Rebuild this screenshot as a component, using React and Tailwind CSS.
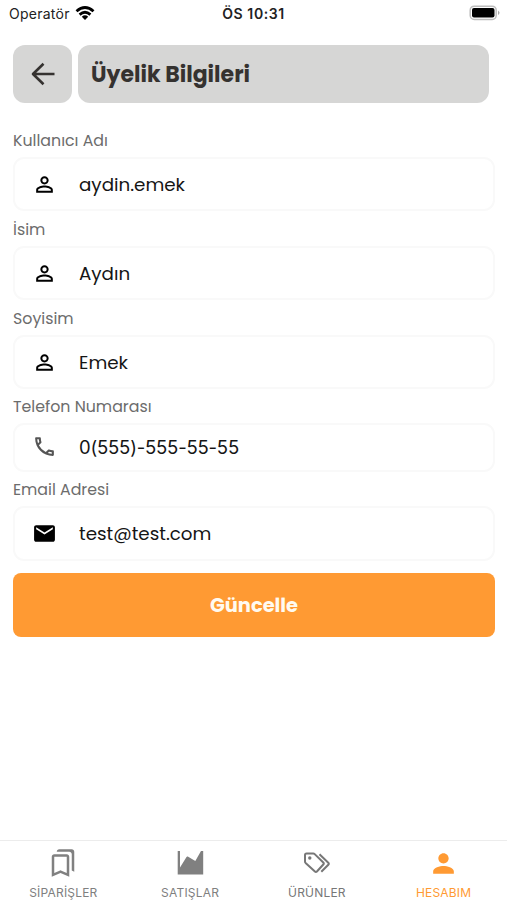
import { MdOutlineBookmarks, MdOutlinePhone, MdPerson, MdPersonOutline, MdEmail } from "react-icons/md";

/* ─── Form fields ─── */
const fields = [
  { label: "Kullanıcı Adı", value: "aydin.emek", icon: MdPersonOutline, labelStyle: "h-[35px]", valueStyle: "mt-[2px] text-[18.300px]", box: "h-[54px]", iconStyle: "text-black" },
  { label: "İsim", value: "Aydın", icon: MdPersonOutline, labelStyle: "h-[35px]", valueStyle: "mt-px text-[18.300px]", box: "h-[54px]", iconStyle: "text-black" },
  { label: "Soyisim", value: "Emek", icon: MdPersonOutline, labelStyle: "h-[35px]", valueStyle: "mt-px text-[18.300px]", box: "h-[54px]", iconStyle: "text-black" },
  { label: "Telefon Numarası", value: "0(555)-555-55-55", icon: MdOutlinePhone, labelStyle: "h-[34px]", valueStyle: "mt-px font-['Inter','Liberation_Sans',sans-serif] text-[18.500px] tracking-[-0.2px]", box: "h-[49px]", iconStyle: "-mt-[3px] text-[#555]" },
  { label: "Email Adresi", value: "test@test.com", icon: MdEmail, labelStyle: "h-[34px]", valueStyle: "text-[18.300px]", box: "h-[55px]", iconStyle: "text-black" },
];

function AreaIcon({ className }) {
  return (
    <svg viewBox="0 0 28 28" className={className} fill="currentColor">
      <path d="M1.700 2h2.300v16.500l6.500-10.600q.5-.8 1.300-.3l7.500 4.300L25 2h2.200v23.500H1.700z" />
    </svg>
  );
}

function TagsIcon({ className }) {
  return (
    <svg viewBox="0 0 28 28" className={className} fill="none" stroke="currentColor" strokeWidth="2" strokeLinejoin="round">
      <path d="M2 6Q2 4.500 3.500 4.500h6.700q.9 0 1.500.6l8.600 8.400q1 1 0 2l-6.400 7q-1 1-2 0L2.600 13.900Q2 13.300 2 12.400z" />
      <path d="m16.500 5.200 8.800 8.600q1 1 0 2l-7 7" />
      <circle cx="6.800" cy="9" r="1.700" fill="currentColor" stroke="none" />
    </svg>
  );
}

const tabs = [
  { label: "SİPARİŞLER", icon: MdOutlineBookmarks, iconStyle: "h-[30px] w-[30px]", color: "text-[#808080]" },
  { label: "SATIŞLAR", icon: AreaIcon, iconStyle: "h-7 w-7", color: "text-[#808080]" },
  { label: "ÜRÜNLER", icon: TagsIcon, iconStyle: "h-7 w-7", color: "text-[#777]" },
  { label: "HESABIM", icon: MdPerson, iconStyle: "h-[31px] w-[31px]", color: "text-[#ff9a33]" },
];

function StatusBar() {
  return (
    <div className="grid h-[27px] grid-cols-3 items-center pr-[7px] pl-[9px] font-['Inter','Liberation_Sans',sans-serif] text-black">
      <div className="flex items-center gap-[5px] text-[14px] tracking-[0.25px]">
        <span className="text-[#222]">Operatör</span>
        <svg viewBox="0 0 20 15" className="-mt-px h-[15px] w-5" fill="none" stroke="currentColor" strokeWidth="2.800">
          <path d="M1.500 5.300Q10-2.300 18.500 5.300M4.600 8.600Q10 3.900 15.400 8.600" />
          <path d="M6.800 10.700Q10 8 13.200 10.700L10 14z" fill="currentColor" stroke="none" />
        </svg>
      </div>
      <span className="-ml-[2px] text-center text-[14px] font-semibold tracking-[0.6px] text-[#222]">ÖS 10:31</span>
      <svg viewBox="0 0 31 16" className="-mt-px h-4 w-[31px] justify-self-end">
        <rect x="1.200" y="1.200" width="26" height="13.200" rx="4" fill="#fff" stroke="#bdbdbd" strokeWidth="1.500" />
        <rect x="3" y="3" width="22.500" height="9.600" rx="2" fill="#000" />
        <path d="M29 5.500q3 2.300 0 4.600z" fill="#aaa" />
      </svg>
    </div>
  );
}

function Field({ field }) {
  const Icon = field.icon;
  return (
    <div>
      <div className={`flex items-center pt-[2px] text-[15.800px] text-[#6c6c6c] ${field.labelStyle}`}>
        <span>{field.label}</span>
      </div>
      <div className={`flex items-center rounded-[11px] border-2 border-[#f9f9f9] pl-[17px] ${field.box}`}>
        <Icon className={`h-[25px] w-[25px] ${field.iconStyle}`} />
        <span className={`ml-[22px] text-[#151515] ${field.valueStyle}`}>{field.value}</span>
      </div>
    </div>
  );
}

function App() {
  return (
    <main className="flex h-[900px] w-[507px] flex-col overflow-hidden bg-white font-['Poppins','Inter',sans-serif]">
      <StatusBar />

      {/* Header */}
      <header className="mt-[18px] flex h-[58px] gap-[6px] pr-[18px] pl-[13px] text-[#353230]">
        <button className="flex w-[59px] items-center justify-center rounded-[12px] bg-[#d6d6d5]">
          <svg viewBox="0 0 24 24" className="h-6 w-6" fill="none" stroke="currentColor" strokeWidth="2.600" strokeLinejoin="round">
            <path d="M23.500 12H2M12.500 1.800 2 12l10.500 10.200" />
          </svg>
        </button>
        <h1 className="flex flex-1 items-center rounded-[12px] bg-[#d6d6d5] pl-[13px] text-[22px] font-bold">Üyelik Bilgileri</h1>
      </header>

      {/* Membership form */}
      <section className="mt-[19px] flex flex-1 flex-col pr-[12px] pl-[13px]">
        {fields.map((field) => (
          <Field key={field.label} field={field} />
        ))}
        <button className="mt-[12px] h-[64px] rounded-[8px] bg-[#ff9a33] pt-[2px] text-[19.400px] font-bold text-[#fffaf0]">Güncelle</button>
      </section>

      {/* Bottom navigation */}
      <nav className="grid h-[60px] grid-cols-4 border-t border-[#ececec] font-['Inter','Liberation_Sans',sans-serif]">
        {tabs.map(({ label, icon: Icon, iconStyle, color }) => (
          <div key={label} className={`flex flex-col items-center pt-[7px] ${color}`}>
            <div className="flex h-[30px] items-center">
              <Icon className={iconStyle} />
            </div>
            <span className="mt-[6px] text-[12px] leading-[18px] tracking-[0.2px]">{label}</span>
          </div>
        ))}
      </nav>
    </main>
  );
}

export default App;
